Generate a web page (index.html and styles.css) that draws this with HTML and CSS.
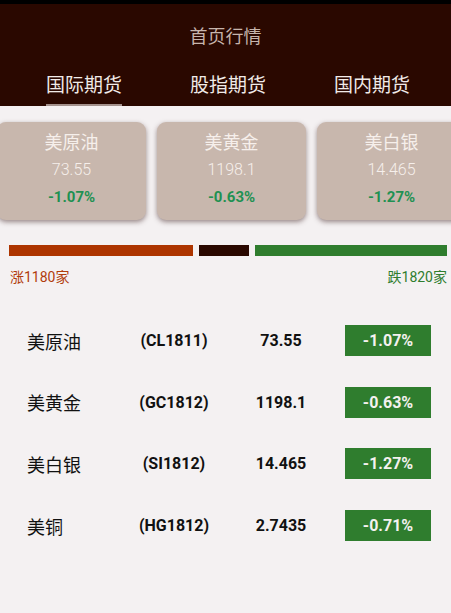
FILE: index.html
```html
<!DOCTYPE html>
<html lang="zh">
<head>
<meta charset="utf-8">
<title>首页行情</title>
<link rel="stylesheet" href="styles.css">
</head>
<body>
<header class="header">
  <div class="status"></div>
  <div class="title">首页行情</div>
  <nav class="tabs">
    <div class="tab active"><span>国际期货</span></div>
    <div class="tab"><span>股指期货</span></div>
    <div class="tab"><span>国内期货</span></div>
  </nav>
</header>
<section class="cards">
  <div class="card">
    <div class="card-name">美原油</div>
    <div class="card-value">73.55</div>
    <div class="card-pct">-1.07%</div>
  </div>
  <div class="card">
    <div class="card-name">美黄金</div>
    <div class="card-value">1198.1</div>
    <div class="card-pct">-0.63%</div>
  </div>
  <div class="card">
    <div class="card-name">美白银</div>
    <div class="card-value">14.465</div>
    <div class="card-pct">-1.27%</div>
  </div>
</section>
<section class="ratio">
  <div class="bars">
    <div class="bar bar-up"></div>
    <div class="bar bar-flat"></div>
    <div class="bar bar-down"></div>
  </div>
  <div class="labels">
    <span class="up">涨1180家</span>
    <span class="down">跌1820家</span>
  </div>
</section>
<section class="list">
  <div class="row">
    <div class="name">美原油</div>
    <div class="code">(CL1811)</div>
    <div class="price">73.55</div>
    <div class="cell-badge"><span class="badge">-1.07%</span></div>
  </div>
  <div class="row">
    <div class="name">美黄金</div>
    <div class="code">(GC1812)</div>
    <div class="price">1198.1</div>
    <div class="cell-badge"><span class="badge">-0.63%</span></div>
  </div>
  <div class="row">
    <div class="name">美白银</div>
    <div class="code">(SI1812)</div>
    <div class="price">14.465</div>
    <div class="cell-badge"><span class="badge">-1.27%</span></div>
  </div>
  <div class="row">
    <div class="name">美铜</div>
    <div class="code">(HG1812)</div>
    <div class="price">2.7435</div>
    <div class="cell-badge"><span class="badge">-0.71%</span></div>
  </div>
</section>
</body>
</html>
```
FILE: styles.css
```css
* { box-sizing: border-box; }
html, body {
  margin: 0;
  padding: 0;
  width: 451px;
  height: 613px;
  overflow: hidden;
  background: #f4f1f2;
  font-family: Roboto, "Noto Sans CJK SC", sans-serif;
}
.header {
  background: #2a0800;
  height: 106px;
  display: flex;
  flex-direction: column;
}
.status {
  height: 4px;
  background: #000;
}
.title {
  height: 58px;
  display: flex;
  align-items: center;
  justify-content: center;
  color: #c7b5ad;
  font-size: 18px;
  padding-top: 3px;
}
.tabs {
  flex: 1;
  display: flex;
  padding-left: 12px;
}
.tab {
  width: 144px;
  display: flex;
  justify-content: center;
}
.tab span {
  display: flex;
  align-items: center;
  color: #f1ebe8;
  font-size: 19px;
  line-height: 1;
  padding-top: 5px;
  border-bottom: 2px solid transparent;
}
.tab.active span {
  border-bottom-color: #a3918c;
}
.cards {
  display: flex;
  gap: 11px;
  margin: 16px 0 0 -3px;
}
.card {
  flex: 0 0 149px;
  height: 98px;
  background: #c8b7ad;
  border-radius: 9px;
  box-shadow: 0 2px 5px rgba(60, 30, 30, 0.5);
  display: flex;
  flex-direction: column;
  align-items: center;
  padding-top: 9px;
}
.card-name {
  color: #f6efeb;
  font-size: 18px;
  line-height: 24px;
}
.card-value {
  color: #f6efeb;
  font-size: 16px;
  font-weight: 300;
  line-height: 22px;
  margin-top: 4px;
}
.card-pct {
  color: #1f9152;
  font-size: 15px;
  font-weight: 700;
  line-height: 20px;
  margin-top: 6px;
}
.ratio {
  padding: 25px 4px 0 9px;
}
.bars {
  display: flex;
  gap: 6px;
  height: 11px;
}
.bar-up { flex: 0 0 184px; background: #ad3500; }
.bar-flat { flex: 0 0 50px; background: #2a0800; }
.bar-down { flex: 1; background: #2f7d2e; }
.labels {
  display: flex;
  justify-content: space-between;
  font-size: 14px;
  line-height: 20px;
  margin-top: 11px;
  padding-left: 1px;
}
.up { color: #b13c0c; }
.down { color: #2f7d2e; }
.list {
  margin-top: 23px;
}
.row {
  height: 61.6px;
  display: grid;
  grid-template-columns: 93.5px 107px 107px 107px;
  align-items: center;
  padding-left: 27px;
}
.name {
  font-size: 18px;
  color: #111;
}
.code, .price {
  text-align: center;
  font-size: 16px;
  font-weight: 700;
  color: #111;
}
.cell-badge {
  display: flex;
  justify-content: center;
}
.badge {
  width: 86px;
  height: 31px;
  display: flex;
  align-items: center;
  justify-content: center;
  background: #2f7d2e;
  color: #f4f1ef;
  font-size: 16px;
  font-weight: 700;
}
```
